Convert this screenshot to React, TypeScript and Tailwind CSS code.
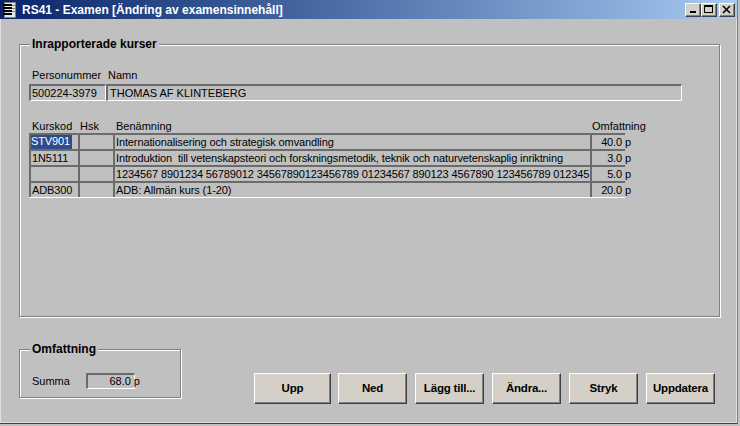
import React from "react";

type Row = {
  kod: string;
  hsk: string;
  ben: string;
  omf: string;
  selected?: boolean;
};

const rows: Row[] = [
  { kod: "STV901", hsk: "", ben: "Internationalisering och strategisk omvandling", omf: "40.0 p", selected: true },
  {
    kod: "1N5111",
    hsk: "",
    ben: "Introduktion  till vetenskapsteori och forskningsmetodik, teknik och naturvetenskaplig inriktning",
    omf: "3.0 p",
  },
  {
    kod: "",
    hsk: "",
    ben: "1234567 8901234 56789012 34567890123456789 01234567 890123 4567890 123456789 012345",
    omf: "5.0 p",
  },
  { kod: "ADB300", hsk: "", ben: "ADB: Allmän kurs (1-20)", omf: "20.0 p" },
];

const buttons = [
  { label: "Upp", w: "w-[77px] mr-[-1px]" },
  { label: "Ned", w: "w-[69px]" },
  { label: "Lägg till...", w: "w-[69px]" },
  { label: "Ändra...", w: "w-[69px]" },
  { label: "Stryk", w: "w-[69px]" },
  { label: "Uppdatera", w: "w-[69px]" },
];

const TitleIcon = () => (
  <svg width="14" height="16" viewBox="0 0 14 16">
    <rect x="1.5" y="0.5" width="11" height="15" fill="#e8e8e8" stroke="#808080" />
    <rect x="0" y="2" width="9" height="2" fill="#000" />
    <rect x="0" y="5" width="9" height="2" fill="#000" />
    <rect x="0" y="8" width="9" height="2" fill="#000" />
    <rect x="0" y="11" width="9" height="2" fill="#000" />
    <rect x="9" y="3" width="3" height="1" fill="#808080" />
    <rect x="9" y="6" width="3" height="1" fill="#808080" />
    <rect x="9" y="9" width="3" height="1" fill="#808080" />
  </svg>
);

const CaptionButton = ({ kind }: { kind: "min" | "max" | "close" }) => (
  <div className="flex h-[14px] w-[16px] items-center justify-center border border-t-white border-l-white border-r-[#404040] border-b-[#404040] bg-[#d4d0c8] shadow-[inset_-1px_-1px_0_#808080]">
    <svg width="10" height="9" viewBox="0 0 10 9">
      {kind === "min" && <rect x="2" y="6" width="6" height="2" fill="#000" />}
      {kind === "max" && (
        <>
          <rect x="0.5" y="0.5" width="8" height="7" fill="none" stroke="#000" />
          <rect x="0" y="0" width="9" height="2" fill="#000" />
        </>
      )}
      {kind === "close" && (
        <path d="M1 1 L8 8 M8 1 L1 8" stroke="#000" strokeWidth="1.6" fill="none" />
      )}
    </svg>
  </div>
);

const GroupBox = ({
  title,
  className,
  children,
}: {
  title: string;
  className?: string;
  children?: React.ReactNode;
}) => (
  <div
    className={`relative border border-[#808080] shadow-[inset_1px_1px_0_#fff,1px_1px_0_#fff] ${className ?? ""}`}
  >
    <span className="absolute left-[10px] top-[-9px] bg-[#c0c0c0] px-[2px] text-[12px] font-bold leading-[16px]">
      {title}
    </span>
    {children}
  </div>
);

const Field = ({ className, children }: { className?: string; children?: React.ReactNode }) => (
  <div
    className={`flex items-center whitespace-nowrap border-t-2 border-l-2 border-b border-r border-t-[#6b6b6b] border-l-[#6b6b6b] border-b-white border-r-white text-[11px] leading-[13px] ${className ?? ""}`}
  >
    {children}
  </div>
);

const Cell = ({ className, children }: { className?: string; children?: React.ReactNode }) => (
  <div
    className={`flex h-[16px] items-center whitespace-nowrap border-t-2 border-l-2 border-[#6b6b6b] text-[11px] leading-[13px] tracking-[-0.12px] ${className ?? ""}`}
  >
    {children}
  </div>
);

export default function App() {
  return (
    <div className="flex h-[426px] w-[740px] flex-col overflow-hidden bg-[#c0c0c0] font-['Liberation_Sans',Arial,sans-serif] text-black">
      <div className="flex h-[424px] w-[738px] flex-col border-r border-b border-r-[#808080] border-b-[#404040] shadow-[inset_1px_0_0_#e0e0e0,inset_-1px_-1px_0_#e0e0e0]">
        {/* title bar */}
        <div className="flex h-[19px] shrink-0 items-center bg-gradient-to-r from-[#0a246a] to-[#a6caf0] pl-[3px] pr-[2px]">
          <TitleIcon />
          <span className="ml-[5px] text-[12px] font-bold leading-[14px] text-white">
            RS41 - Examen [Ändring av examensinnehåll]
          </span>
          <div className="ml-auto flex items-center">
            <CaptionButton kind="min" />
            <CaptionButton kind="max" />
            <div className="w-[2px]" />
            <CaptionButton kind="close" />
          </div>
        </div>

        {/* Inrapporterade kurser */}
        <GroupBox title="Inrapporterade kurser" className="ml-[19px] mt-[25px] h-[273px] w-[701px] shrink-0">
          <div className="flex flex-col pl-[9px] pt-[24px]">
            <div className="flex h-[15px] text-[11px] leading-[13px]">
              <span className="w-[77px] pl-[3px]">Personummer</span>
              <span className="pl-[2px]">Namn</span>
            </div>
            <div className="flex">
              <Field className="h-[17px] w-[77px] pl-[1px]">500224-3979</Field>
              <Field className="h-[17px] w-[576px] pl-[2px]">THOMAS AF KLINTEBERG</Field>
            </div>

            <div className="mt-[19px] flex h-[13px] text-[11px] leading-[13px]">
              <span className="w-[49px] pl-[3px]">Kurskod</span>
              <span className="w-[35px] pl-[2px]">Hsk</span>
              <span className="w-[477px] pl-[3px]">Benämning</span>
              <span className="pl-[2px]">Omfattning</span>
            </div>
            <div className="flex w-[596px] flex-col shadow-[0_1px_0_#fff]">
              {rows.map((r, i) => (
                <div key={i} className="flex">
                  <Cell className="w-[49px]">
                    {r.selected ? (
                      <span className="h-[14px] bg-[#2d4b8f] pr-[2px] text-white">{r.kod}</span>
                    ) : (
                      <span className="pl-[1px]">{r.kod}</span>
                    )}
                  </Cell>
                  <Cell className="w-[35px]">{r.hsk}</Cell>
                  <Cell className="w-[477px] overflow-hidden whitespace-pre pl-[1px]">{r.ben}</Cell>
                  <Cell className="w-[35px] justify-end">
                    <span className="mr-[-6px]">{r.omf}</span>
                  </Cell>
                </div>
              ))}
            </div>
          </div>
        </GroupBox>

        {/* bottom row */}
        <div className="mt-[32px] flex items-start">
          <GroupBox title="Omfattning" className="ml-[19px] h-[49px] w-[162px] shrink-0">
            <div className="flex items-center pl-[12px] pt-[23px]">
              <span className="w-[54px] text-[11px] leading-[13px]">Summa</span>
              <Field className="h-[16px] w-[49px] justify-end">
                <span className="mr-[-6px]">68.0 p</span>
              </Field>
            </div>
          </GroupBox>
          <div className="ml-[73px] mt-[24px] flex gap-[8px]">
            {buttons.map((b) => (
              <button
                key={b.label}
                className={`flex h-[31px] ${b.w} items-center justify-center border border-t-white border-l-white border-r-[#404040] border-b-[#404040] bg-[#d4d0c8] text-[11.5px] font-bold tracking-[-0.2px] shadow-[inset_-1px_-1px_0_#808080]`}
              >
                {b.label}
              </button>
            ))}
          </div>
        </div>
      </div>
    </div>
  );
}
